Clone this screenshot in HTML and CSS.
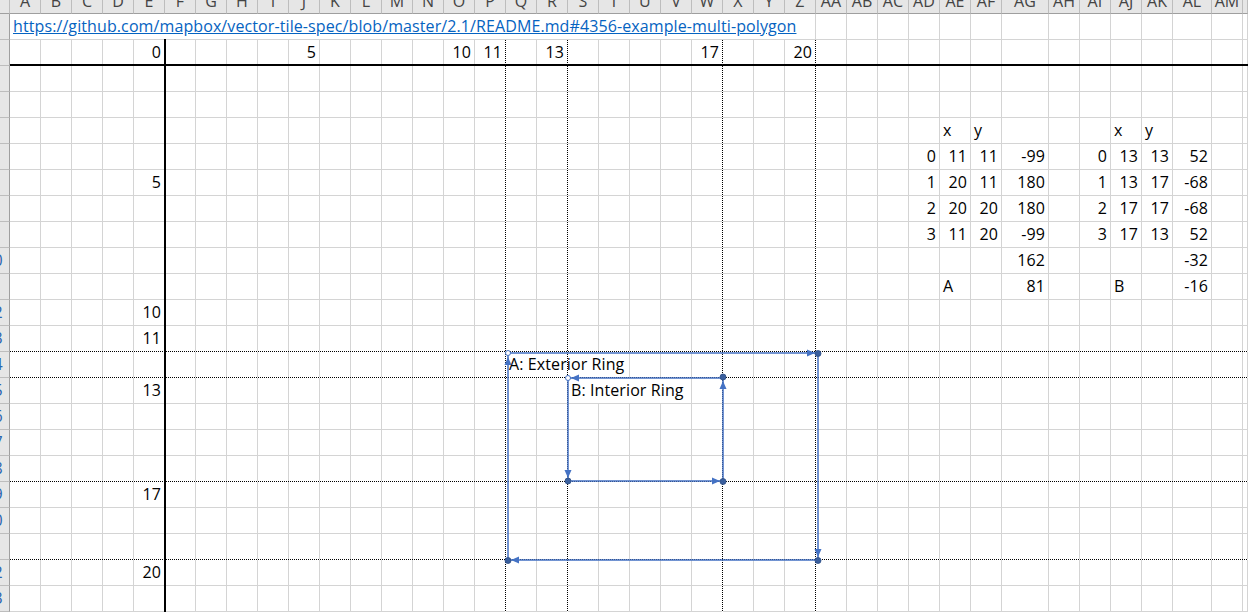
FILE: index.html
```html
<!DOCTYPE html>
<html lang="ja">
<head>
<meta charset="utf-8">
<title>Sheet</title>
<link rel="stylesheet" href="styles.css">
</head>
<body>
<div class="page">
<div class="sheet">
<div class="row hdr"><div></div><div>A</div><div>B</div><div>C</div><div>D</div><div>E</div><div>F</div><div>G</div><div>H</div><div>I</div><div>J</div><div>K</div><div>L</div><div>M</div><div>N</div><div>O</div><div>P</div><div>Q</div><div>R</div><div>S</div><div>T</div><div>U</div><div>V</div><div>W</div><div>X</div><div>Y</div><div>Z</div><div>AA</div><div>AB</div><div>AC</div><div>AD</div><div>AE</div><div>AF</div><div>AG</div><div>AH</div><div>AI</div><div>AJ</div><div>AK</div><div>AL</div><div>AM</div><div></div></div>
<div class="row"><div class="rh"><span>1</span></div><div class="t s26"><span class="lnk">https://github.com/mapbox/vector-tile-spec/blob/master/2.1/README.md#4356-example-multi-polygon</span></div><div></div><div></div><div></div><div></div><div></div><div></div><div></div><div></div><div></div><div></div><div></div><div></div><div></div><div></div></div>
<div class="row"><div class="rh"><span>2</span></div><div></div><div></div><div></div><div></div><div class="n">0</div><div></div><div></div><div></div><div></div><div class="n">5</div><div></div><div></div><div></div><div></div><div class="n">10</div><div class="n">11</div><div></div><div class="n">13</div><div></div><div></div><div></div><div></div><div class="n">17</div><div></div><div></div><div class="n">20</div><div></div><div></div><div></div><div></div><div></div><div></div><div></div><div></div><div></div><div></div><div></div><div></div><div></div><div></div></div>
<div class="row"><div class="rh"><span>3</span></div><div></div><div></div><div></div><div></div><div></div><div></div><div></div><div></div><div></div><div></div><div></div><div></div><div></div><div></div><div></div><div></div><div></div><div></div><div></div><div></div><div></div><div></div><div></div><div></div><div></div><div></div><div></div><div></div><div></div><div></div><div></div><div></div><div></div><div></div><div></div><div></div><div></div><div></div><div></div><div></div></div>
<div class="row"><div class="rh"><span>4</span></div><div></div><div></div><div></div><div></div><div></div><div></div><div></div><div></div><div></div><div></div><div></div><div></div><div></div><div></div><div></div><div></div><div></div><div></div><div></div><div></div><div></div><div></div><div></div><div></div><div></div><div></div><div></div><div></div><div></div><div></div><div></div><div></div><div></div><div></div><div></div><div></div><div></div><div></div><div></div><div></div></div>
<div class="row"><div class="rh"><span>5</span></div><div></div><div></div><div></div><div></div><div></div><div></div><div></div><div></div><div></div><div></div><div></div><div></div><div></div><div></div><div></div><div></div><div></div><div></div><div></div><div></div><div></div><div></div><div></div><div></div><div></div><div></div><div></div><div></div><div></div><div></div><div class="t">x</div><div class="t">y</div><div></div><div></div><div></div><div class="t">x</div><div class="t">y</div><div></div><div></div><div></div></div>
<div class="row"><div class="rh"><span>6</span></div><div></div><div></div><div></div><div></div><div></div><div></div><div></div><div></div><div></div><div></div><div></div><div></div><div></div><div></div><div></div><div></div><div></div><div></div><div></div><div></div><div></div><div></div><div></div><div></div><div></div><div></div><div></div><div></div><div></div><div class="n">0</div><div class="n">11</div><div class="n">11</div><div class="n">-99</div><div></div><div class="n">0</div><div class="n">13</div><div class="n">13</div><div class="n">52</div><div></div><div></div></div>
<div class="row"><div class="rh"><span>7</span></div><div></div><div></div><div></div><div></div><div class="n">5</div><div></div><div></div><div></div><div></div><div></div><div></div><div></div><div></div><div></div><div></div><div></div><div></div><div></div><div></div><div></div><div></div><div></div><div></div><div></div><div></div><div></div><div></div><div></div><div></div><div class="n">1</div><div class="n">20</div><div class="n">11</div><div class="n">180</div><div></div><div class="n">1</div><div class="n">13</div><div class="n">17</div><div class="n">-68</div><div></div><div></div></div>
<div class="row"><div class="rh"><span>8</span></div><div></div><div></div><div></div><div></div><div></div><div></div><div></div><div></div><div></div><div></div><div></div><div></div><div></div><div></div><div></div><div></div><div></div><div></div><div></div><div></div><div></div><div></div><div></div><div></div><div></div><div></div><div></div><div></div><div></div><div class="n">2</div><div class="n">20</div><div class="n">20</div><div class="n">180</div><div></div><div class="n">2</div><div class="n">17</div><div class="n">17</div><div class="n">-68</div><div></div><div></div></div>
<div class="row"><div class="rh"><span>9</span></div><div></div><div></div><div></div><div></div><div></div><div></div><div></div><div></div><div></div><div></div><div></div><div></div><div></div><div></div><div></div><div></div><div></div><div></div><div></div><div></div><div></div><div></div><div></div><div></div><div></div><div></div><div></div><div></div><div></div><div class="n">3</div><div class="n">11</div><div class="n">20</div><div class="n">-99</div><div></div><div class="n">3</div><div class="n">17</div><div class="n">13</div><div class="n">52</div><div></div><div></div></div>
<div class="row"><div class="rh"><span>10</span></div><div></div><div></div><div></div><div></div><div></div><div></div><div></div><div></div><div></div><div></div><div></div><div></div><div></div><div></div><div></div><div></div><div></div><div></div><div></div><div></div><div></div><div></div><div></div><div></div><div></div><div></div><div></div><div></div><div></div><div></div><div></div><div></div><div class="n">162</div><div></div><div></div><div></div><div></div><div class="n">-32</div><div></div><div></div></div>
<div class="row"><div class="rh"><span>11</span></div><div></div><div></div><div></div><div></div><div></div><div></div><div></div><div></div><div></div><div></div><div></div><div></div><div></div><div></div><div></div><div></div><div></div><div></div><div></div><div></div><div></div><div></div><div></div><div></div><div></div><div></div><div></div><div></div><div></div><div></div><div class="t">A</div><div></div><div class="n">81</div><div></div><div></div><div class="t">B</div><div></div><div class="n">-16</div><div></div><div></div></div>
<div class="row"><div class="rh"><span>12</span></div><div></div><div></div><div></div><div></div><div class="n">10</div><div></div><div></div><div></div><div></div><div></div><div></div><div></div><div></div><div></div><div></div><div></div><div></div><div></div><div></div><div></div><div></div><div></div><div></div><div></div><div></div><div></div><div></div><div></div><div></div><div></div><div></div><div></div><div></div><div></div><div></div><div></div><div></div><div></div><div></div><div></div></div>
<div class="row"><div class="rh"><span>13</span></div><div></div><div></div><div></div><div></div><div class="n">11</div><div></div><div></div><div></div><div></div><div></div><div></div><div></div><div></div><div></div><div></div><div></div><div></div><div></div><div></div><div></div><div></div><div></div><div></div><div></div><div></div><div></div><div></div><div></div><div></div><div></div><div></div><div></div><div></div><div></div><div></div><div></div><div></div><div></div><div></div><div></div></div>
<div class="row"><div class="rh"><span>14</span></div><div></div><div></div><div></div><div></div><div></div><div></div><div></div><div></div><div></div><div></div><div></div><div></div><div></div><div></div><div></div><div></div><div class="t s4">A: Exterior Ring</div><div></div><div></div><div></div><div></div><div></div><div></div><div></div><div></div><div></div><div></div><div></div><div></div><div></div><div></div><div></div><div></div><div></div><div></div><div></div><div></div></div>
<div class="row"><div class="rh"><span>15</span></div><div></div><div></div><div></div><div></div><div class="n">13</div><div></div><div></div><div></div><div></div><div></div><div></div><div></div><div></div><div></div><div></div><div></div><div></div><div></div><div class="t s4">B: Interior Ring</div><div></div><div></div><div></div><div></div><div></div><div></div><div></div><div></div><div></div><div></div><div></div><div></div><div></div><div></div><div></div><div></div><div></div><div></div></div>
<div class="row"><div class="rh"><span>16</span></div><div></div><div></div><div></div><div></div><div></div><div></div><div></div><div></div><div></div><div></div><div></div><div></div><div></div><div></div><div></div><div></div><div></div><div></div><div></div><div></div><div></div><div></div><div></div><div></div><div></div><div></div><div></div><div></div><div></div><div></div><div></div><div></div><div></div><div></div><div></div><div></div><div></div><div></div><div></div><div></div></div>
<div class="row"><div class="rh"><span>17</span></div><div></div><div></div><div></div><div></div><div></div><div></div><div></div><div></div><div></div><div></div><div></div><div></div><div></div><div></div><div></div><div></div><div></div><div></div><div></div><div></div><div></div><div></div><div></div><div></div><div></div><div></div><div></div><div></div><div></div><div></div><div></div><div></div><div></div><div></div><div></div><div></div><div></div><div></div><div></div><div></div></div>
<div class="row"><div class="rh"><span>18</span></div><div></div><div></div><div></div><div></div><div></div><div></div><div></div><div></div><div></div><div></div><div></div><div></div><div></div><div></div><div></div><div></div><div></div><div></div><div></div><div></div><div></div><div></div><div></div><div></div><div></div><div></div><div></div><div></div><div></div><div></div><div></div><div></div><div></div><div></div><div></div><div></div><div></div><div></div><div></div><div></div></div>
<div class="row"><div class="rh"><span>19</span></div><div></div><div></div><div></div><div></div><div class="n">17</div><div></div><div></div><div></div><div></div><div></div><div></div><div></div><div></div><div></div><div></div><div></div><div></div><div></div><div></div><div></div><div></div><div></div><div></div><div></div><div></div><div></div><div></div><div></div><div></div><div></div><div></div><div></div><div></div><div></div><div></div><div></div><div></div><div></div><div></div><div></div></div>
<div class="row"><div class="rh"><span>20</span></div><div></div><div></div><div></div><div></div><div></div><div></div><div></div><div></div><div></div><div></div><div></div><div></div><div></div><div></div><div></div><div></div><div></div><div></div><div></div><div></div><div></div><div></div><div></div><div></div><div></div><div></div><div></div><div></div><div></div><div></div><div></div><div></div><div></div><div></div><div></div><div></div><div></div><div></div><div></div><div></div></div>
<div class="row"><div class="rh"><span>21</span></div><div></div><div></div><div></div><div></div><div></div><div></div><div></div><div></div><div></div><div></div><div></div><div></div><div></div><div></div><div></div><div></div><div></div><div></div><div></div><div></div><div></div><div></div><div></div><div></div><div></div><div></div><div></div><div></div><div></div><div></div><div></div><div></div><div></div><div></div><div></div><div></div><div></div><div></div><div></div><div></div></div>
<div class="row"><div class="rh"><span>22</span></div><div></div><div></div><div></div><div></div><div class="n">20</div><div></div><div></div><div></div><div></div><div></div><div></div><div></div><div></div><div></div><div></div><div></div><div></div><div></div><div></div><div></div><div></div><div></div><div></div><div></div><div></div><div></div><div></div><div></div><div></div><div></div><div></div><div></div><div></div><div></div><div></div><div></div><div></div><div></div><div></div><div></div></div>
<div class="row"><div class="rh"><span>23</span></div><div></div><div></div><div></div><div></div><div></div><div></div><div></div><div></div><div></div><div></div><div></div><div></div><div></div><div></div><div></div><div></div><div></div><div></div><div></div><div></div><div></div><div></div><div></div><div></div><div></div><div></div><div></div><div></div><div></div><div></div><div></div><div></div><div></div><div></div><div></div><div></div><div></div><div></div><div></div><div></div></div>
</div>
<svg class="overlay" width="1248" height="612" viewBox="0 0 1248 612">
  <g stroke="#fff" stroke-width="1">
    <line x1="505.5" y1="40" x2="505.5" y2="612"/>
    <line x1="567.5" y1="40" x2="567.5" y2="612"/>
    <line x1="722.5" y1="40" x2="722.5" y2="612"/>
    <line x1="815.5" y1="40" x2="815.5" y2="612"/>
    <line x1="10" y1="351.5" x2="1248" y2="351.5"/>
    <line x1="10" y1="377.5" x2="1248" y2="377.5"/>
    <line x1="10" y1="481.5" x2="1248" y2="481.5"/>
    <line x1="10" y1="559.5" x2="1248" y2="559.5"/>
  </g>
  <g stroke="#000" stroke-width="1" stroke-dasharray="1 1">
    <line x1="505.5" y1="40" x2="505.5" y2="612"/>
    <line x1="567.5" y1="40" x2="567.5" y2="612"/>
    <line x1="722.5" y1="40" x2="722.5" y2="612"/>
    <line x1="815.5" y1="40" x2="815.5" y2="612"/>
    <line x1="10" y1="351.5" x2="1248" y2="351.5"/>
    <line x1="10" y1="377.5" x2="1248" y2="377.5"/>
    <line x1="10" y1="481.5" x2="1248" y2="481.5"/>
    <line x1="10" y1="559.5" x2="1248" y2="559.5"/>
  </g>
  <rect x="164" y="39" width="2" height="573" fill="#000"/>
  <rect x="10" y="64" width="1238" height="2" fill="#000"/>
  <g fill="none" stroke="#4472c4" stroke-width="1.5">
    <polyline points="508,353 818,353 818,560 508,560 508,353"/>
    <polyline points="568,378 568,481 723,481 723,378 568,378"/>
  </g>
  <g fill="#4472c4">
    <polygon points="815,353 807,349.5 807,356.5"/>
    <polygon points="818,557 814.5,549 821.5,549"/>
    <polygon points="511,560 519,556.5 519,563.5"/>
    <polygon points="508,357 504.5,365 511.5,365"/>
    <polygon points="568,478 564.5,470 571.5,470"/>
    <polygon points="720,481 712,477.5 712,484.5"/>
    <polygon points="723,381 719.5,389 726.5,389"/>
    <polygon points="571,378 579,374.5 579,381.5"/>
  </g>
  <g fill="#3a5f9e" stroke="#2f4f85" stroke-width="0.8">
    <circle cx="818" cy="353.5" r="3"/>
    <circle cx="818" cy="560.5" r="3"/>
    <circle cx="508" cy="560.5" r="3"/>
    <circle cx="568" cy="481" r="3"/>
    <circle cx="723" cy="481.5" r="3"/>
    <circle cx="723" cy="377" r="3"/>
  </g>
  <g fill="#fff" stroke="#4472c4" stroke-width="1">
    <circle cx="508" cy="353" r="2.5"/>
    <circle cx="568" cy="378" r="2.5"/>
  </g>
</svg>
</div>
</body>
</html>
```

FILE: styles.css
```css
html, body {
  margin: 0;
  padding: 0;
  background: #fff;
}

body {
  font-family: "Open Sans", "Noto Sans CJK JP", sans-serif;
  font-size: 16px;
  letter-spacing: 0.1px;
  color: #000;
}

.page {
  position: relative;
  width: 1248px;
  height: 612px;
  overflow: hidden;
}

.sheet {
  display: flex;
  flex-direction: column;
}

.row {
  display: grid;
  grid-template-columns: 10px repeat(32, 31px) 47px repeat(4, 31px) 39px 31px 1fr;
  height: 26px;
}

.row > div {
  box-sizing: border-box;
  border-right: 1px solid #d4d4d4;
  border-bottom: 1px solid #d4d4d4;
  white-space: nowrap;
  overflow: hidden;
  line-height: 25px;
}

.hdr {
  height: 14px;
}

.hdr > div {
  background: #e6e6e6;
  border-right-color: #bdbdbd;
  border-bottom-color: #9f9f9f;
  color: #444;
  text-align: center;
  line-height: 2px;
}

.row > .rh {
  background: #e6e6e6;
  border-right-color: #9f9f9f;
  border-bottom-color: #bdbdbd;
}

.rh span {
  display: block;
  width: 31px;
  margin-left: -22px;
  text-align: center;
  color: #2a64b0;
}

.n {
  text-align: right;
  padding-right: 3px;
}

.t {
  padding-left: 3px;
}

.s4 {
  grid-column: span 4;
}

.s26 {
  grid-column: span 26;
}

.lnk {
  color: #0563c1;
  text-decoration: underline;
}

.overlay {
  position: absolute;
  left: 0;
  top: 0;
}
```
